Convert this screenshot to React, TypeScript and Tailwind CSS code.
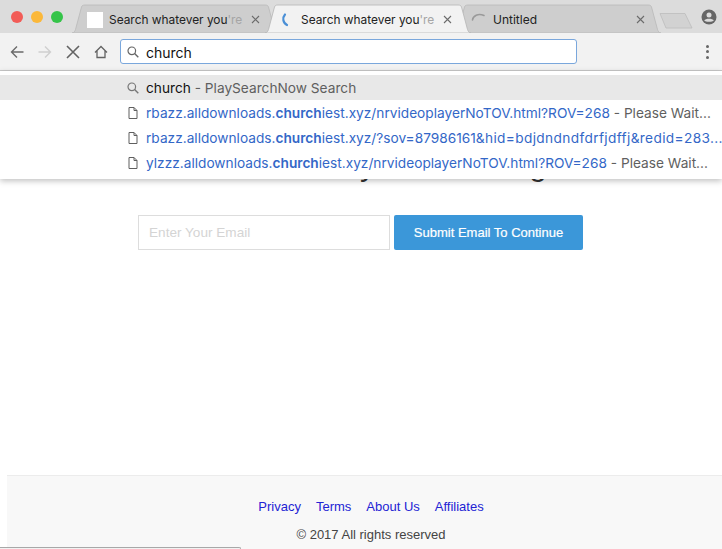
import React from "react";

const ui = "font-['Inter',sans-serif]";

function Tab({ left, active, pad, children, close }: { left: string; active?: boolean; pad: string; children: React.ReactNode; close: string }) {
  return (
    <div className={`relative h-[33px] w-[206px] shrink-0 ${left} ${active ? "z-10" : ""}`}>
      <svg className="absolute inset-0 h-full w-full" viewBox="0 0 206 33" preserveAspectRatio="none">
        <path
          d="M0 33 C2 33 3 31 3.500 29.500 L9.500 7 C10 5.500 11 5 13 5 L193 5 C195 5 196 5.500 196.500 7 L202.500 29.500 C203 31 204 33 206 33 Z"
          fill={active ? "#f2f2f2" : "#cecece"}
          stroke={active ? "#b5b5b5" : "#b9b9b9"}
          strokeWidth="0.8"
        />
      </svg>
      <div className={`relative flex h-full items-center pt-[6px] ${pad}`}>
        {children}
        <span className={`ml-auto ${close}`}>
          <svg width="9" height="9" viewBox="0 0 9 9"><path d="M1 1 L8 8 M8 1 L1 8" stroke="#6b6b6b" strokeWidth="1.1" /></svg>
        </span>
      </div>
    </div>
  );
}

function TabTitle() {
  return (
    <span className={`ml-[6px] whitespace-nowrap text-[11.9px] text-[#222] ${ui}`}>
      Search whatever you<span className="text-[#a5a5a5]">'re</span>
    </span>
  );
}

function Spinner({ color, d, width }: { color: string; d: string; width: string }) {
  return (
    <svg width="16" height="16" viewBox="0 0 16 16" className="shrink-0" fill="none">
      <path d={d} stroke={color} strokeWidth={width} strokeLinecap="round" />
    </svg>
  );
}

function DocIcon() {
  return (
    <svg width="10" height="12" viewBox="0 0 10 12" fill="none" className="shrink-0">
      <path d="M1 .5 H6 L9 3.500 V11.500 H1 Z M6 .5 V3.500 H9" stroke="#5f5f5f" strokeWidth="1" />
    </svg>
  );
}

function SearchIcon({ color }: { color: string }) {
  return (
    <svg width="12" height="12" viewBox="0 0 12 12" fill="none" className="shrink-0">
      <circle cx="4.800" cy="4.800" r="3.800" stroke={color} strokeWidth="1.200" />
      <path d="M7.600 7.600 L11.300 11.300" stroke={color} strokeWidth="1.400" />
    </svg>
  );
}

function Row({ host, rest, desc, tail }: { host: string; rest: string; desc?: string; tail?: string }) {
  return (
    <div className="flex h-[25px] items-center whitespace-nowrap pl-[128px]">
      <DocIcon />
      <span className="ml-[8px] pt-[1px] text-[#3367c7]">
        {host}
        <b className="font-semibold">church</b>
        {rest}
        {tail && <span className="tracking-[0.35px]">{tail}</span>}
      </span>
      {desc && <span className="pt-[1px] text-[#5f5f5f]">&nbsp;- {desc}</span>}
    </div>
  );
}

export default function App() {
  return (
    <div className="relative h-[549px] w-[722px] overflow-hidden bg-white">
      {/* Tab strip */}
      <div className="flex h-[33px] items-stretch bg-[#dcdcdc]">
        <div className="flex w-[72px] shrink-0 items-center gap-[8px] pl-[11px] pt-[1px]">
          <span className="size-[12px] rounded-full bg-[#f25c57]" />
          <span className="size-[12px] rounded-full bg-[#fbb83a]" />
          <span className="size-[12px] rounded-full bg-[#35c449]" />
        </div>
        <Tab left="" pad="pl-[15px] pr-[18px]" close="">
          <span className="size-[16px] shrink-0 bg-white" />
          <TabTitle />
        </Tab>
        <Tab left="-ml-[13px]" active pad="pl-[14px] pr-[19px]" close="">
          <Spinner color="#4a8fd6" width="2.2" d="M6 2.500 C3 6 4 11 8 13" />
          <TabTitle />
        </Tab>
        <Tab left="-ml-[16px]" pad="pl-[16px] pr-[16px]" close="">
          <Spinner color="#9a9a9a" width="1.6" d="M1.500 8 C2 4 7 1 13 3.500" />
          <span className={`ml-[6px] text-[12px] text-[#222] ${ui}`}>Untitled</span>
        </Tab>
        <div className="-ml-[2px] flex flex-1 items-center justify-between pt-[6px] pr-[5px]">
          <svg width="34" height="17" viewBox="0 0 34 17" className="mt-[2px]">
            <path d="M1 1.500 H26 L33 16 H7 Z" fill="#d2d2d2" stroke="#bdbdbd" strokeWidth="0.800" />
          </svg>
          <svg width="16" height="16" viewBox="0 0 16 16" className="mb-[6px]">
            <circle cx="8" cy="8" r="7.500" fill="#666" />
            <circle cx="8" cy="6" r="2.500" fill="#dcdcdc" />
            <path d="M3.200 11.500 C4.500 9.300 11.500 9.300 12.800 11.500 C11.500 13.300 4.500 13.300 3.200 11.500 Z" fill="#dcdcdc" />
          </svg>
        </div>
      </div>

      {/* Toolbar */}
      <div className="flex h-[38px] items-center border-b border-[#c9c9c9] bg-[#f2f2f2]">
        <div className="flex w-[120px] shrink-0 items-center pl-[10px]">
          <svg width="14" height="14" viewBox="0 0 14 14" fill="none"><path d="M13.500 7 H1.500 M7 1.500 L1.500 7 L7 12.500" stroke="#6a6a6a" strokeWidth="1.400" /></svg>
          <svg width="14" height="14" viewBox="0 0 14 14" fill="none" className="ml-[14px]"><path d="M.5 7 H12.500 M7 1.500 L12.500 7 L7 12.500" stroke="#cfcfcf" strokeWidth="1.400" /></svg>
          <svg width="14" height="14" viewBox="0 0 14 14" fill="none" className="ml-[14px]"><path d="M1 1 L13 13 M13 1 L1 13" stroke="#636363" strokeWidth="1.600" /></svg>
          <svg width="14" height="14" viewBox="0 0 14 14" fill="none" className="ml-[14px]"><path d="M1 7.500 L7 1.500 L13 7.500 M3 6 V12.500 H11 V6" stroke="#636363" strokeWidth="1.300" /></svg>
        </div>
        <div className={`flex h-[25px] w-[457px] items-center rounded-[3px] border border-[#7aa7dc] bg-white pl-[6px] text-[14px] text-[#111] ${ui}`}>
          <SearchIcon color="#666" />
          <span className="ml-[7px] pt-[1px]">church</span>
        </div>
        <div className="ml-auto mr-[13px] flex flex-col gap-[2.5px]">
          <span className="size-[3px] rounded-full bg-[#666]" />
          <span className="size-[3px] rounded-full bg-[#666]" />
          <span className="size-[3px] rounded-full bg-[#666]" />
        </div>
      </div>

      {/* Page */}
      <div className="flex h-[478px] flex-col font-['Liberation_Sans',sans-serif]">
        <div className="flex h-[88px] shrink-0 pl-[360px] pt-[73px] text-[32px] leading-[40px] text-[#333]">
          <span>y</span>
          <span className="ml-[153px]">g</span>
        </div>
        <div className="mt-[56px] flex pl-[138px]">
          <div className="flex h-[35px] w-[252px] items-center border border-[#ddd] pl-[10px] pt-[1px] text-[13.6px] text-[#d4d4d4]">Enter Your Email</div>
          <button className="ml-[4px] h-[35px] w-[189px] rounded-[2px] bg-[#3b97d9] text-[13px] font-medium text-white [-webkit-text-stroke:0.2px_white]">Submit Email To Continue</button>
        </div>
        <div className="ml-[7px] mt-auto h-[74px] border-t border-[#ececec] bg-[#f8f8f8] pl-[13px] text-center">
          <div className="flex justify-center gap-[15px] pt-[23px] text-[13px] leading-[16px] text-[#2323d4]">
            <span>Privacy</span>
            <span>Terms</span>
            <span>About Us</span>
            <span>Affiliates</span>
          </div>
          <div className="pt-[12px] text-[13px] leading-[16px] text-[#444]">© 2017 All rights reserved</div>
        </div>
      </div>

      {/* Omnibox dropdown */}
      <div className={`absolute inset-x-0 top-[71px] h-[108px] bg-white pt-[4px] text-[13.7px] shadow-[0_2px_6px_rgba(0,0,0,0.25)] ${ui}`}>
        <div className="flex h-[25px] items-center whitespace-nowrap bg-[#e8e8e8] pl-[127px]">
          <SearchIcon color="#777" />
          <span className="ml-[7px] pt-[1px] text-[#111]">church</span>
          <span className="pt-[1px] text-[#5f5f5f]">&nbsp;- PlaySearchNow Search</span>
        </div>
        <Row host="rbazz.alldownloads." rest="iest.xyz/nrvideoplayerNoTOV.html?ROV=268" desc="Please Wait..." />
        <Row host="rbazz.alldownloads." rest="iest.xyz/?sov=87986161" tail="&hid=bdjdndndfdrfjdffj&redid=283..." />
        <Row host="ylzzz.alldownloads." rest="iest.xyz/nrvideoplayerNoTOV.html?ROV=268" desc="Please Wait..." />
      </div>

      {/* Status bubble */}
      <div className="absolute bottom-0 left-0 h-[2px] w-[241px] rounded-tr-[3px] border-r border-t border-[#a8a8a8] bg-[#f2f2f2]" />
    </div>
  );
}
